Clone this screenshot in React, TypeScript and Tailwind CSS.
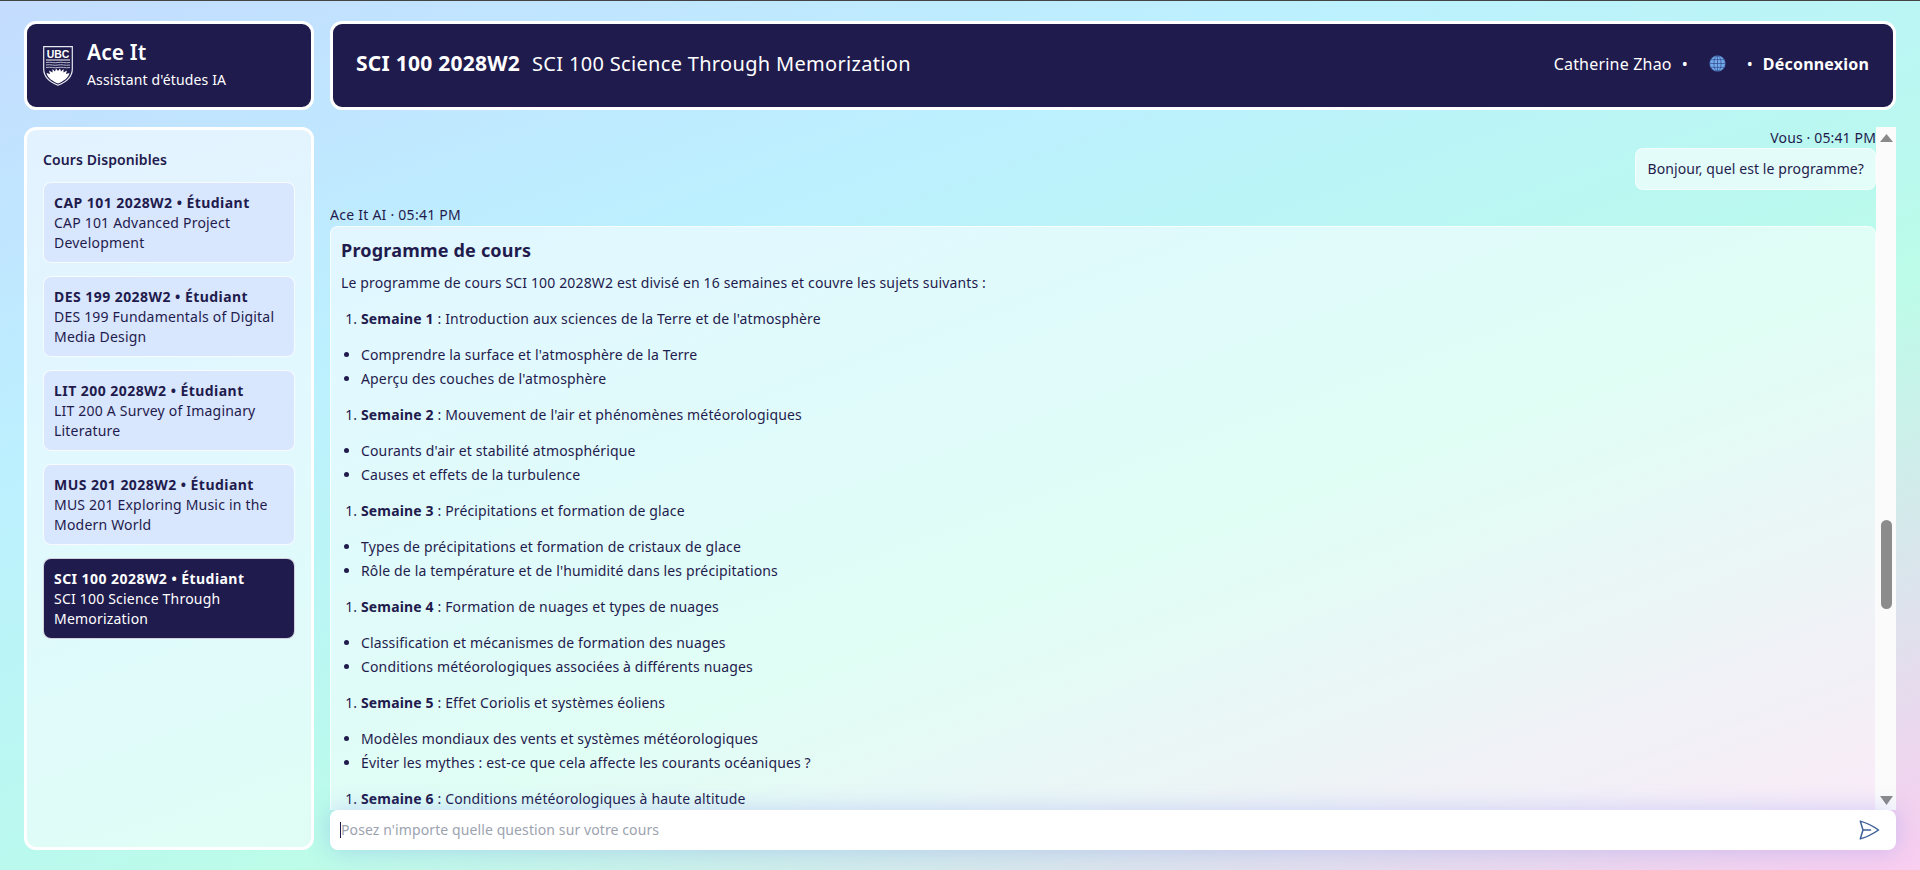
import React from 'react';

const courses = [
  { code: 'CAP 101 2028W2', name: 'CAP 101 Advanced Project Development' },
  { code: 'DES 199 2028W2', name: 'DES 199 Fundamentals of Digital Media Design' },
  { code: 'LIT 200 2028W2', name: 'LIT 200 A Survey of Imaginary Literature' },
  { code: 'MUS 201 2028W2', name: 'MUS 201 Exploring Music in the Modern World' },
  { code: 'SCI 100 2028W2', name: 'SCI 100 Science Through Memorization', active: true },
];

const weeks = [
  {
    title: 'Semaine 1',
    text: "Introduction aux sciences de la Terre et de l'atmosphère",
    items: ["Comprendre la surface et l'atmosphère de la Terre", "Aperçu des couches de l'atmosphère"],
  },
  {
    title: 'Semaine 2',
    text: "Mouvement de l'air et phénomènes météorologiques",
    items: ["Courants d'air et stabilité atmosphérique", 'Causes et effets de la turbulence'],
  },
  {
    title: 'Semaine 3',
    text: 'Précipitations et formation de glace',
    items: ['Types de précipitations et formation de cristaux de glace', "Rôle de la température et de l'humidité dans les précipitations"],
  },
  {
    title: 'Semaine 4',
    text: 'Formation de nuages et types de nuages',
    items: ['Classification et mécanismes de formation des nuages', 'Conditions météorologiques associées à différents nuages'],
  },
  {
    title: 'Semaine 5',
    text: 'Effet Coriolis et systèmes éoliens',
    items: ['Modèles mondiaux des vents et systèmes météorologiques', 'Éviter les mythes : est-ce que cela affecte les courants océaniques ?'],
  },
  {
    title: 'Semaine 6',
    text: 'Conditions météorologiques à haute altitude',
    items: [],
  },
];

const UbcLogo = () => (
  <svg width="30" height="40" viewBox="0 0 30 40" className="shrink-0">
    <path d="M0.7 0.7H29.3V23C29.3 32 22 36.5 15 39.3C8 36.5 0.7 32 0.7 23Z" fill="none" stroke="#e8e8f0" strokeWidth="1.2" />
    <text x="15" y="11.5" textAnchor="middle" fontSize="10.5" fontWeight="700" fill="#ffffff" fontFamily="'Liberation Sans', sans-serif">UBC</text>
    <path d="M3 14H27" stroke="#ffffff" strokeWidth="1" />
    <path d="M3 16.5C8 15.5 11 17.5 15 16.5C19 15.5 22 17.5 27 16.5M3 19C8 18 11 20 15 19C19 18 22 20 27 19M3 21.5C8 20.5 11 22.5 15 21.5C19 20.5 22 22.5 27 21.5" stroke="#b9b9cc" strokeWidth="1" fill="none" />
    <path d="M3.5 27L7 28L6 24.5L9.5 26.5L9.5 23L12 25.5L13 22.5L15 25L17 22.5L18 25.5L20.5 23L20.5 26.5L24 24.5L23 28L26.5 27C25.5 32 20 35.5 15 37.5C10 35.5 4.5 32 3.5 27Z" fill="#ffffff" />
  </svg>
);

const Globe = () => (
  <svg width="17" height="17" viewBox="0 0 17 17" className="shrink-0">
    <circle cx="8.5" cy="8.5" r="8" fill="#72abec" />
    <g fill="none" stroke="#2b3c7c" strokeWidth="0.6">
      <circle cx="8.5" cy="8.5" r="7.9" />
      <ellipse cx="8.5" cy="8.5" rx="3.6" ry="7.9" />
      <path d="M8.5 0.7V16.3M0.7 8.5H16.3M1.8 4.6H15.2M1.8 12.4H15.2" />
    </g>
  </svg>
);

const Sidebar = () => (
  <aside className="flex-1 rounded-[12px] border-[3px] border-white bg-white/55 px-[16px] pt-[20px]">
    <h2 className="mb-[12px] text-[14px] font-semibold leading-[20px] tracking-[0.1px]">Cours Disponibles</h2>
    <div className="flex flex-col gap-[13.1px]">
      {courses.map((course) => (
        <div
          key={course.code}
          className={
            course.active
              ? 'rounded-[8px] border border-white/80 bg-[#1f1b4d] pb-[9px] pl-[10px] pr-[8px] pt-[10px] text-[14px] leading-[20px] tracking-[0.2px] text-white'
              : 'rounded-[8px] border border-white/80 bg-[#d8e6fe] pb-[9px] pl-[10px] pr-[8px] pt-[10px] text-[14px] leading-[20px] tracking-[0.2px]'
          }
        >
          <div className="font-bold tracking-[0.45px]">{course.code} • Étudiant</div>
          <div>{course.name}</div>
        </div>
      ))}
    </div>
  </aside>
);

const TopBar = () => (
  <header className="flex h-[89px] items-center justify-between rounded-[12px] border-[3px] border-white bg-[#1f1b4d] pb-[4px] pl-[23px] pr-[24px] text-white">
    <div className="flex items-baseline gap-[12px]">
      <span className="text-[21px] font-bold tracking-[0.25px]">SCI 100 2028W2</span>
      <span className="text-[20px] tracking-[0.32px]">SCI 100 Science Through Memorization</span>
    </div>
    <div className="flex items-center text-[16px]">
      <span className="tracking-[0.2px]">Catherine Zhao</span>
      <span className="ml-[10px]">•</span>
      <span className="ml-[21px]"><Globe /></span>
      <span className="ml-[21px]">•</span>
      <span className="ml-[10px] font-bold tracking-[0.2px]">Déconnexion</span>
    </div>
  </header>
);

const Scrollbar = () => (
  <div className="relative w-[20px] shrink-0 bg-[#fbfbfb]">
    <svg width="13" height="8" viewBox="0 0 13 8" className="absolute left-[4px] top-[7px]">
      <path d="M6.5 0L13 8H0Z" fill="#8a8a8a" />
    </svg>
    <div className="absolute left-[5px] top-[393px] h-[89px] w-[11px] rounded-[6px] bg-[#8c8c8c]" />
    <svg width="13" height="9" viewBox="0 0 13 9" className="absolute bottom-[5px] left-[4px]">
      <path d="M0 0H13L6.5 9Z" fill="#8a8a8a" />
    </svg>
  </div>
);

const Messages = () => (
  <div className="min-w-0 flex-1 overflow-hidden pt-[1px] tracking-[0.145px]">
    <div className="text-right text-[14px] leading-[20px]">Vous · 05:41 PM</div>
    <div className="flex justify-end">
      <div className="rounded-[8px] border border-white/50 bg-white/60 px-[11px] py-[10px] text-[14px] leading-[20px] tracking-[0.1px]">
        Bonjour, quel est le programme?
      </div>
    </div>
    <div className="mt-[15px] text-[14px] leading-[20px] tracking-[0.25px]">Ace It AI · 05:41 PM</div>
    <div className="mt-[1px] rounded-[8px] border border-white/70 bg-white/55 px-[10px] pb-[40px] pt-[10px] text-[14px] leading-[24px]">
      <h3 className="text-[18px] font-bold leading-[27px] tracking-[0.2px]">Programme de cours</h3>
      <p className="mt-[7px]">Le programme de cours SCI 100 2028W2 est divisé en 16 semaines et couvre les sujets suivants :</p>
      {weeks.map((week) => (
        <div key={week.title}>
          <ol className="mt-[12px] list-decimal pl-[20px]">
            <li>
              <strong className="font-bold">{week.title}</strong> : {week.text}
            </li>
          </ol>
          {week.items.length > 0 && (
            <ul className="mt-[12px] list-disc pl-[20px]">
              {week.items.map((item) => (
                <li key={item}>{item}</li>
              ))}
            </ul>
          )}
        </div>
      ))}
    </div>
  </div>
);

const ChatInput = () => (
  <div className="relative z-10 flex h-[40px] shrink-0 items-center rounded-[8px] bg-white pl-[10px] pr-[15px] shadow-[0_0_24px_rgba(90,110,245,0.26)]">
    <div className="h-[16px] w-px bg-[#1f1b4d]" />
    <span className="flex-1 pb-[2px] text-[14px] tracking-[0.1px] text-[#9ca3af]">Posez n'importe quelle question sur votre cours</span>
    <svg width="24" height="24" viewBox="0 0 24 24" fill="none" stroke="#3b5f96" strokeWidth="1.5" strokeLinecap="round" strokeLinejoin="round">
      <path d="M6 12L3.269 3.126A59.768 59.768 0 0 1 21.485 12 59.77 59.77 0 0 1 3.27 20.876L5.999 12zm0 0h7.5" />
    </svg>
  </div>
);

export default function App() {
  return (
    <div className="flex h-[870px] gap-[16px] overflow-hidden border-t border-[#444444] bg-[linear-gradient(160deg,#c4dcff_0%,#bcf0ff_30%,#baf9ee_55%,#bcfce8_62%,#f9cdf0_100%)] px-[24px] pb-[20px] pt-[20px] font-['Noto_Sans',sans-serif] text-[#1f1b4d]">
      <div className="flex w-[290px] shrink-0 flex-col gap-[17px]">
        <div className="flex h-[89px] items-center gap-[14px] rounded-[12px] border-[3px] border-white bg-[#1f1b4d] pl-[16px] text-white">
          <UbcLogo />
          <div className="pb-[4px]">
            <div className="text-[21px] font-semibold leading-[28px] tracking-[0.1px]">Ace It</div>
            <div className="mt-[4px] text-[14px] leading-[20px] tracking-[0.15px]">Assistant d'études IA</div>
          </div>
        </div>
        <Sidebar />
      </div>
      <div className="flex min-w-0 flex-1 flex-col gap-[17px]">
        <TopBar />
        <div className="flex min-h-0 flex-1 flex-col">
          <div className="flex min-h-0 flex-1">
            <Messages />
            <Scrollbar />
          </div>
          <ChatInput />
        </div>
      </div>
    </div>
  );
}
